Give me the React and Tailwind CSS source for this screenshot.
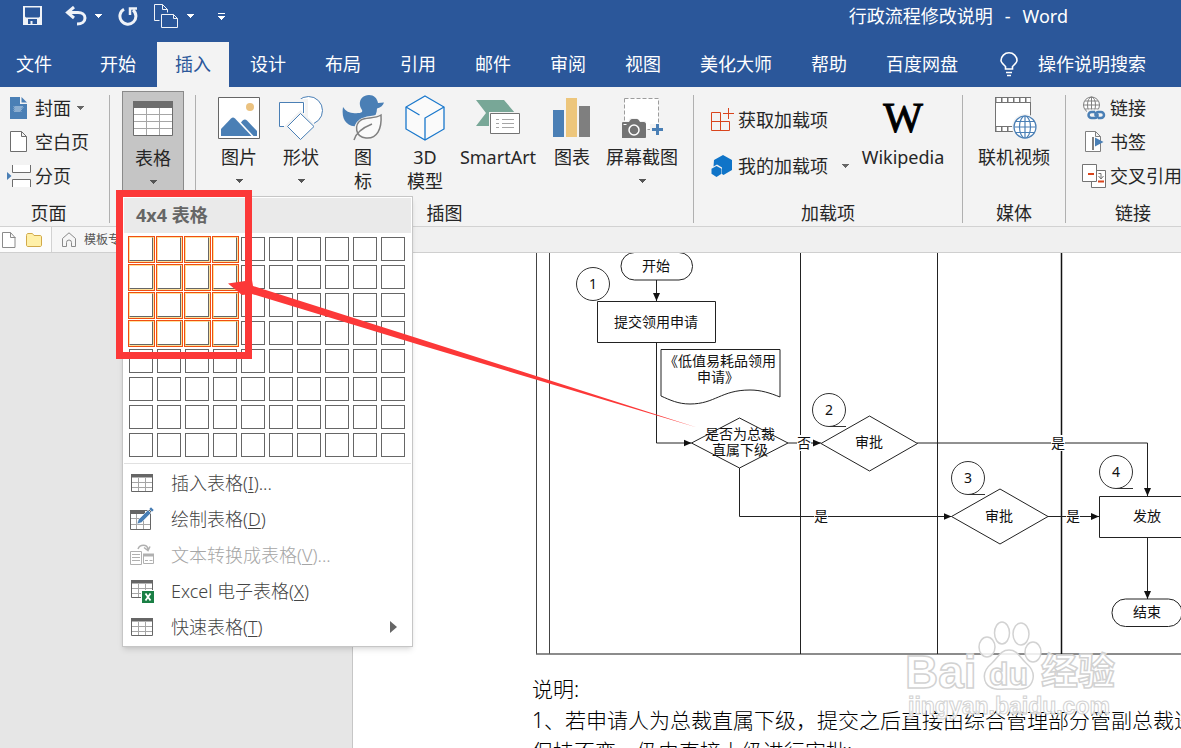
import React, { useState } from 'react';
import clsx from 'clsx';

const TABS = ['开始', '插入', '设计', '布局', '引用', '邮件', '审阅', '视图', '美化大师', '帮助', '百度网盘'];

const Caret = ({ className }) => (
  <svg width="7" height="4" viewBox="0 0 7 4" className={className} fill="currentColor" shapeRendering="crispEdges">
    <path d="M0 0h7L3.5 4z" />
  </svg>
);

/* ---------- quick access icons ---------- */

const SaveIcon = () => (
  <svg width="20" height="20" viewBox="0 0 20 20" fill="#f0f3f8">
    <path fillRule="evenodd" d="M0 0h19v19H0zM2 1.5v9l1 1h13l1-1v-9zM5 13v5h2.500v-3h2v3H14v-5z" />
  </svg>
);

const UndoIcon = () => (
  <svg width="22" height="20" viewBox="0 0 22 20" fill="none" stroke="#f0f3f8" strokeWidth="3">
    <path d="M9 1 2.500 6.500 9 12M3 6.500h10c4 0 7 2 7 5.500S17 18 12 18" />
  </svg>
);

const RedoIcon = () => (
  <svg width="20" height="20" viewBox="0 0 20 20" fill="none" stroke="#f0f3f8" strokeWidth="3">
    <path d="M6 3.200A8 8 0 1 0 15 4" />
    <path d="M12 9V2.500h7" strokeWidth="2.500" />
  </svg>
);

const CopyIcon = () => (
  <svg width="25" height="25" viewBox="0 0 25 25" fill="none" stroke="#f0f3f8">
    <path d="M5.500 16.500h-5v-16h8l5 5v3M8.500.5v5h5" />
    <path d="M7.500 10.500h12l4 4v9h-16zM19.500 10.500v4h4" />
  </svg>
);

const BulbIcon = () => (
  <svg width="18" height="25" viewBox="0 0 18 25" fill="none" stroke="#fff" strokeWidth="1.600">
    <path d="M5.500 17v-2.500C3 12 1 10.500 1 8.500a8 7.700 0 0 1 16 0c0 2-2 3.500-4.500 6V17zM6 20.500h6M7 23.500h4" />
  </svg>
);

/* ---------- ribbon icons ---------- */

const CoverIcon = () => (
  <svg width="24" height="24" viewBox="0 0 24 24">
    <path d="M3 1h10v7h7v15H3z" fill="#4a7fb5" />
    <path d="M14.500 1v5.500H20z" fill="#4a7fb5" />
    <path d="m7 10.500 1 1 1-1 1 1 1-1 1 1 1-1 1 1 1-1 1 1M7 12.500l1 1 1-1 1 1 1-1 1 1 1-1 1 1 1-1M7 14.500l1 1 1-1 1 1 1-1 1 1 1-1 1 1" fill="none" stroke="#fff" strokeWidth=".8" />
  </svg>
);

const BlankPageIcon = () => (
  <svg width="24" height="24" viewBox="0 0 24 24" fill="#fff" stroke="#6d6d6d">
    <path d="M3.500 1.500h11l5 5v15h-16zM14.500 1.500v5h5" />
  </svg>
);

const PageBreakIcon = () => (
  <svg width="24" height="24" viewBox="0 0 24 24">
    <path d="M5.500 1v7.500h18V1M5.500 23v-7.500h18V23" fill="#fff" stroke="#6d6d6d" />
    <path d="M0 8v8l4.500-4z" fill="#4a7fb5" />
  </svg>
);

const TableIcon = () => (
  <svg width="40" height="36" viewBox="0 0 40 36">
    <path d="M.5.500h39v34H.5z" fill="#fff" stroke="#6d6d6d" />
    <path d="M0 0h40v7H0z" fill="#6d6d6d" />
    <path d="M1 13.500h38M1 20.500h38M1 27.500h38M13.500 7v27M26.500 7v27" stroke="#a6a6a6" />
  </svg>
);

const PictureIcon = () => (
  <svg width="42" height="42" viewBox="0 0 42 42">
    <path d="M.5.500h41v41H.5z" fill="#fff" stroke="#666" />
    <circle cx="32" cy="10" r="4" fill="#ebc280" />
    <path d="M3 32 13 21.500c1.500-1.500 2.500-1.500 4 0L33.500 39H3z" fill="#4a7fb5" />
    <path d="M23 25.500c2-3 4-4 6-2L39 34v5h-3.500z" fill="#4a7fb5" />
  </svg>
);

const ShapesIcon = () => (
  <svg width="44" height="44" viewBox="0 0 44 44" fill="#fff" stroke="#4a7fb5">
    <circle cx="29.500" cy="14.500" r="14" />
    <path d="M-.5 4.500h28v27H-.5z" stroke="#f3f3f3" strokeWidth="3" />
    <path d="M.5 6.500h24v24H.5z" />
    <path d="M21.500 14.500 38 31 21.500 47 5 31z" stroke="#f3f3f3" fill="#f3f3f3" />
    <path d="M21.500 17.500 35 30.500l-13.500 13L8.500 30.500z" />
  </svg>
);

const DuckIcon = () => (
  <svg width="42" height="46" viewBox="0 0 42 46">
    <path d="M1 12c3 5 8 7 15 6 3 0 5-1 4-3-5-7-1-15 7-15 5 0 8 3 9 8l6-.5c-1 3-3 5-7 6 0 9-8 18-18 18C5 32-1 25 1 12z" fill="#4a7fb5" />
    <path d="M39 20c1 14-4 24-15 24-12 0-12-13-5-18 5-4 14-2 20-6z" fill="#fafafa" stroke="#f3f3f3" strokeWidth="4" />
    <path d="M39 20c1 14-4 24-15 23-11-1-12-13-5-18 5-3 14-1 20-5zM12 45c2-7 8-12 18-16" fill="#fafafa" stroke="#808080" strokeWidth="1.500" />
  </svg>
);

const CubeIcon = () => (
  <svg width="40" height="46" viewBox="0 0 40 46" fill="#fafafa" stroke="#1a78cc" strokeWidth="1.300">
    <path d="M20 1 39 12v22L20 45 1 34V12z" />
    <path d="M1 12l13.500 8M20 45V23l19-11" fill="none" />
  </svg>
);

const SmartArtIcon = () => (
  <svg width="44" height="36" viewBox="0 0 44 36">
    <path d="M0 0h28l11 13-11 13H0l10-13z" fill="#78a797" />
    <path d="M13 12h32v24H13z" fill="#f3f3f3" />
    <path d="M14.500 13.500h29v20h-29z" fill="#fff" stroke="#737373" />
    <path d="M20 19.500h3m3 0h12M20 23.500h3m3 0h12M20 27.500h3m3 0h12" stroke="#a6a6a6" />
  </svg>
);

const ChartIcon = () => (
  <svg width="38" height="40" viewBox="0 0 38 40">
    <path d="M0 12h11v27H0z" fill="#4a7fb5" />
    <path d="M13 0h11v39H13z" fill="#edc67c" />
    <path d="M26 8h11v31H26z" fill="#7f7f7f" />
  </svg>
);

const ScreenshotIcon = () => (
  <svg width="42" height="42" viewBox="0 0 42 42">
    <path d="M3.500 1.500h34v31h-34z" fill="#fff" stroke="#9c9c9c" strokeDasharray="4 2" />
    <path d="M0 24h7l2-3h7l2 3h7v18H0zM29 27h13v12H29z" fill="#f3f3f3" />
    <path d="M1 26c0-1 1-1 1-1h6c1-2 2-3 3-3h5c1 0 2 1 3 3h4c1 0 2 1 2 2v13c0 1-1 1-1 1H1z" fill="#737373" />
    <circle cx="13" cy="33" r="5" fill="#737373" stroke="#fff" strokeWidth="1.500" />
    <path d="M2.500 27.500h3" stroke="#fff" />
    <path d="M36.500 27v11M31 32.500h11" stroke="#4a7fb5" strokeWidth="3" />
  </svg>
);

const StoreIcon = () => (
  <svg width="24" height="24" viewBox="0 0 24 24" fill="none" stroke="#d9441c">
    <path d="M10.500 4.500h-9v18h18v-9h-18M10.500 4.500v18M18.500 0v11M13 5.500h11" />
  </svg>
);

const MyAddinsIcon = () => (
  <svg width="24" height="24" viewBox="0 0 24 24" fill="#0f74c8">
    <path d="m13 1 9 5v10l-8.500 5-1.500-1v-6.500l-5-3-3.500 2L4 6z" />
    <path d="m6.500 12 5 2.800v5L6.500 23l-5-3.200v-5z" />
  </svg>
);

const VideoIcon = () => (
  <svg width="46" height="44" viewBox="-3 0 46 44">
    <path d="M1.500 1.500h35v34h-35z" fill="#fff" stroke="#737373" />
    <path d="M1 4h36M1 33h36" stroke="#737373" strokeWidth="6" />
    <path d="M2.500 4h34M2.500 33h34" stroke="#fff" strokeWidth="4" strokeDasharray="4.500 1.500" />
    <circle cx="31" cy="31" r="13" fill="#f3f3f3" />
    <g fill="#fff" stroke="#4a7fb5" strokeWidth="1.200">
      <circle cx="31" cy="31" r="11" />
      <ellipse cx="31" cy="31" rx="5.500" ry="11" />
      <path d="M20 31h22M31 20v22M22 25.500h18M22 36.500h18" />
    </g>
  </svg>
);

const LinkIcon = () => (
  <svg width="24" height="24" viewBox="0 0 24 24" fill="none">
    <g stroke="#808080">
      <circle cx="9.500" cy="9" r="8" fill="#fff" />
      <ellipse cx="9.500" cy="9" rx="4" ry="8" />
      <path d="M1.500 9h16M9.500 1v16M3 5h13M3 13h13" />
    </g>
    <path d="M5 13.500h19v11H5z" fill="#f3f3f3" />
    <path d="M13 16H9.500a3 3 0 0 0 0 6H13c3 0 3-3 2-4M16 22h3a3 3 0 0 0 0-6h-3c-3 0-3 3-2 4" stroke="#4a7fb5" strokeWidth="2.500" />
  </svg>
);

const BookmarkIcon = () => (
  <svg width="24" height="24" viewBox="0 0 24 24">
    <path d="M3.500 1.500h10l5 5v15h-15zM13.500 1.500v5h5" fill="#fff" stroke="#808080" />
    <path d="M11 7v13" stroke="#555" strokeWidth="1.500" />
    <path d="M13 7.500v9l8.500-4.500z" fill="#4a7fb5" />
  </svg>
);

const CrossRefIcon = () => (
  <svg width="24" height="24" viewBox="0 0 24 24" fill="#fff" stroke="#737373">
    <path d="M9.500 6.500h14v17h-14z" />
    <path d="M.5.500h14v17H.5z" />
    <path d="M16.500 9.500h2.500v5M16.500 12l2.500 3 2.500-3" fill="none" />
    <path d="M6 10h6M16 17.500h6" stroke="#d9441c" strokeWidth="2" />
  </svg>
);

/* ---------- menu icons ---------- */

const GridGlyph = () => (
  <>
    <path d="M1.500 1.500h21v17h-21z" fill="#fff" stroke="#666" />
    <path d="M1 1h22v3.500H1z" fill="#666" />
    <path d="M2 9.500h20M2 14.500h20M8.500 5v13M15.500 5v13" stroke="#a6a6a6" />
  </>
);

const MenuTableIcon = () => (
  <svg width="24" height="20" viewBox="0 0 24 20"><GridGlyph /></svg>
);

const DrawTableIcon = () => (
  <svg width="24" height="24" viewBox="0 0 24 24">
    <path d="M.5 3.500h20v19H.5z" fill="#fff" stroke="#666" />
    <path d="M0 3h15v4H0z" fill="#666" />
    <path d="M1 11.500h12M1 17.500h19M6.500 7v15M13.500 12v10" stroke="#a6a6a6" />
    <path d="m7 17 1.500-4.500L18 3l3 3-9.500 9.500zM19 2l2-2 3 3-2 2z" fill="#4a7fb5" stroke="#fff" strokeWidth=".5" />
  </svg>
);

const ConvertIcon = () => (
  <svg width="24" height="24" viewBox="0 0 24 24" fill="none" stroke="#b0b0b0">
    <path d="M.5 8.500h11v13H.5zM2 11.500h8M2 14.500h8M2 17.500h8" />
    <path d="M13.500 11.500h10v9h-10zM15 17.500h3M19.500 17.500h3" />
    <path d="M13 12h11" strokeWidth="3" />
    <path d="M8 6c2-5 9-5 10 0M14 4.500l4 3 2-4" strokeWidth="1.500" />
  </svg>
);

const ExcelTableIcon = () => (
  <svg width="24" height="24" viewBox="0 0 24 24">
    <GridGlyph />
    <path d="M11 11h13v13H11z" fill="#fff" />
    <path d="M12 12h12v12H12z" fill="#1a7f45" />
    <path d="m15.500 14.500 5 7M20.500 14.500l-5 7" stroke="#fff" strokeWidth="1.800" />
  </svg>
);

const MENU_ITEMS = [
  { icon: <MenuTableIcon />, label: '插入表格', accel: 'I', dots: true },
  { icon: <DrawTableIcon />, label: '绘制表格', accel: 'D' },
  { icon: <ConvertIcon />, label: '文本转换成表格', accel: 'V', dots: true, disabled: true },
  { icon: <ExcelTableIcon />, label: 'Excel 电子表格', accel: 'X' },
  { icon: <MenuTableIcon />, label: '快速表格', accel: 'T', submenu: true },
];

const Separator = () => <div className="mt-1 h-32 w-px shrink-0 bg-[#b0b0b0]" />;

const Group = ({ label, className, labelClass, children }) => (
  <section className={clsx('flex shrink-0 flex-col', className)}>
    <div className="flex h-[110px]">{children}</div>
    <div className={clsx('text-center leading-6', labelClass)}>{label}</div>
  </section>
);

const BigButton = ({ icon, label, label2, caret, className }) => (
  <button type="button" className={clsx('flex h-[104px] shrink-0 flex-col items-center whitespace-nowrap', className)}>
    <span className="flex h-[54px] items-center justify-center">{icon}</span>
    <span className="leading-6">{label}</span>
    {label2 && <span className="leading-6">{label2}</span>}
    {caret && <Caret className="mt-2.5 text-[#555]" />}
  </button>
);

const SmallButton = ({ icon, label, caret, className, caretClass = 'ml-1.5' }) => (
  <button type="button" className={clsx('flex items-center whitespace-nowrap', className)}>
    <span className="mr-1 flex w-6 justify-center">{icon}</span>
    <span>{label}</span>
    {caret && <Caret className={clsx('text-[#666]', caretClass)} />}
  </button>
);

const TableMenu = ({ rows, cols, onPick }) => (
  <div className="absolute top-[105px] left-0 z-20 w-[291px] border border-[#c6c6c6] bg-white p-px text-[#444] shadow-md">
    <div className="h-[35px] bg-[#eaeaea] pl-3 leading-[35px] font-bold text-[#666]">
      {rows}x{cols} 表格
    </div>
    <div className="grid grid-cols-[repeat(10,24px)] gap-1 border-b border-[#e1e1e1] pt-1 pb-1.5 pl-[5px]">
      {Array.from({ length: 80 }, (_, i) => {
        const r = Math.floor(i / 10);
        const c = i % 10;
        const on = r < rows && c < cols;
        return (
          <button
            key={i}
            type="button"
            aria-label={`${r + 1}x${c + 1}`}
            onClick={() => onPick(r + 1, c + 1)}
            className={clsx(
              'h-6 border',
              on
                ? 'border-t-[#ffe29a] border-r-[#666] border-b-[#666] border-l-[#ffe29a] shadow-[1px_1px_0_#ffe29a,1px_0_0_#ffe29a,0_1px_0_#ffe29a,2px_2px_0_#f04e12,-1px_-1px_0_#f04e12,2px_-1px_0_#f04e12,-1px_2px_0_#f04e12]'
                : 'border-[#666]'
            )}
          />
        );
      })}
    </div>
    <ul className="pt-px font-light">
      {MENU_ITEMS.map((m) => (
        <li key={m.accel}>
          <button
            type="button"
            disabled={m.disabled}
            className={clsx('flex h-9 w-full items-center pl-1.5', m.disabled && 'text-[#a6a6a6]')}
          >
            <span className="mr-[17px] flex w-6 justify-center">{m.icon}</span>
            <span>
              {m.label}(<u className="underline-offset-2">{m.accel}</u>){m.dots && '...'}
            </span>
            {m.submenu && (
              <svg width="7" height="12" viewBox="0 0 7 12" className="mr-3.5 ml-auto" fill="#666">
                <path d="M0 0v12l7-6z" />
              </svg>
            )}
          </button>
        </li>
      ))}
    </ul>
  </div>
);

/* ---------- document drawing ---------- */

const Label = ({ x, y, children }) => (
  <text x={x} y={y + 5} textAnchor="middle" fontSize="14" fill="#111">{children}</text>
);

const LineLabel = ({ x, y, children }) => (
  <g>
    <path d={`M${x - 7} ${y - 8}h14v16h-14z`} fill="#fff" />
    <Label x={x} y={y}>{children}</Label>
  </g>
);

const Step = ({ x, y, n, tail }) => (
  <g>
    <circle cx={x} cy={y} r="16.500" fill="#fff" stroke="#333" />
    {tail && <path d={`M${x} ${y + 16.5}h17`} stroke="#333" />}
    <Label x={x} y={y}>{n}</Label>
  </g>
);

const FlowChart = () => (
  <svg width="649" height="402" viewBox="532 253 649 402" className="block shrink-0" fill="none">
    <defs>
      <marker id="tip" viewBox="0 0 8 8" refX="8" refY="4" markerWidth="8" markerHeight="8" markerUnits="userSpaceOnUse" orient="auto">
        <path d="M0 .5 8 4 0 7.500z" fill="#111" />
      </marker>
    </defs>
    <g stroke="#444">
      <path d="M536.500 253v401M549.500 253v401" />
      <path d="M536 654h645" stroke="#666" strokeWidth="1.500" />
      <path d="M800.500 253v401M937.500 253v401" stroke="#222" />
      <path d="M1061.500 253v401" stroke="#111" strokeWidth="1.500" />
    </g>
    <g stroke="#222">
      <rect x="621" y="252.500" width="71.500" height="27.500" rx="13.500" />
      <path d="M597.500 301.500h118v41h-118z" />
      <path d="M661 349.500h119V397c-10-4-19-7-30-7-29 0-35 14-60 14-12 0-20-4-29-8z" />
      <path d="m691.500 443 48-25 48.500 25-48.500 25z" />
      <path d="m821 443.500 48.500-27.500 48 27.500-48 27.500z" />
      <path d="m951.500 516.500 48.500-27.500 48 27.500-48 27.500z" />
      <path d="M1099.500 496.500h95v41h-95z" />
      <rect x="1112" y="599" width="70" height="27.500" rx="13.500" />
      <path d="M656.500 280v21" markerEnd="url(#tip)" />
      <path d="M656.500 343v100h35" markerEnd="url(#tip)" />
      <path d="M788 443h33" markerEnd="url(#tip)" />
      <path d="M917 443h230.500v53" markerEnd="url(#tip)" />
      <path d="M739.500 468v48.500h212" markerEnd="url(#tip)" />
      <path d="M1048 516.500h51" markerEnd="url(#tip)" />
      <path d="M1147.500 538v61" markerEnd="url(#tip)" />
    </g>
    <Step x={593} y={284} n="1" />
    <Step x={829} y={410} n="2" tail />
    <Step x={968} y={478} n="3" tail />
    <Step x={1116} y={472} n="4" tail />
    <Label x={656} y={266}>开始</Label>
    <Label x={656} y={322}>提交领用申请</Label>
    <Label x={720} y={361}>《低值易耗品领用</Label>
    <Label x={718} y={377}>申请》</Label>
    <Label x={740} y={434}>是否为总裁</Label>
    <Label x={740} y={450}>直属下级</Label>
    <Label x={869} y={442}>审批</Label>
    <Label x={999} y={516}>审批</Label>
    <Label x={1147} y={516}>发放</Label>
    <Label x={1147} y={612}>结束</Label>
    <LineLabel x={804} y={443}>否</LineLabel>
    <LineLabel x={1058} y={443}>是</LineLabel>
    <LineLabel x={821} y={516}>是</LineLabel>
    <LineLabel x={1073} y={516}>是</LineLabel>
  </svg>
);

const Watermark = () => (
  <svg
    width="220"
    height="104"
    viewBox="900 618 220 104"
    className="pointer-events-none absolute top-[365px] left-[547px]"
    fill="#fff"
    fillOpacity=".85"
    stroke="#d2d2d2"
  >
    <g strokeWidth="1.500">
      <ellipse cx="987" cy="647" rx="8" ry="10" />
      <ellipse cx="1002" cy="633" rx="7.500" ry="11" />
      <ellipse cx="1021" cy="634" rx="8" ry="11" />
      <ellipse cx="1033" cy="652" rx="8" ry="10" />
      <path d="M1009 650c9 0 11 8 17 13 7 6 9 12 6 19-4 9-13 7-22 7s-19 2-24-6c-4-8 0-15 6-20s8-13 17-13z" />
    </g>
    <g fontFamily="Liberation Sans, Noto Sans CJK SC, sans-serif" fontWeight="700" strokeWidth="1.500">
      <text x="905" y="688" fontSize="46">Bai</text>
      <text x="989" y="685" fontSize="32">du</text>
      <text x="1041" y="685" fontSize="37">经验</text>
    </g>
    <text x="908" y="714" fontSize="23" fontFamily="Liberation Sans, sans-serif" fontWeight="700">jingyan.baidu.com</text>
  </svg>
);

const Annotation = () => (
  <svg width="700" height="440" viewBox="0 0 700 440" className="pointer-events-none absolute top-0 left-0 z-30">
    <path d="M119.500 193.500h129v162h-129z" fill="none" stroke="#fc3838" strokeWidth="7" />
    <path d="M228 283.500 252 280l1 6 167 53 277 88.500L420 345 252 294l-10 1z" fill="#fc3838" />
  </svg>
);

export default function App() {
  const [active, setActive] = useState('插入');
  const [size, setSize] = useState({ rows: 4, cols: 4 });

  return (
    <div className="relative flex h-screen flex-col overflow-hidden bg-[#e6e6e6] font-['Noto_Sans','Noto_Sans_CJK_SC',sans-serif] text-[18px] text-[#262626]">
      <header className="shrink-0 bg-[#2b579a] text-white">
        <div className="flex h-[42px] items-start">
          <div className="flex h-8 items-center pl-[23px]">
            <button type="button" aria-label="保存"><SaveIcon /></button>
            <button type="button" aria-label="撤消" className="ml-[22px] flex items-center gap-2">
              <UndoIcon />
              <Caret />
            </button>
            <button type="button" aria-label="重复" className="ml-4"><RedoIcon /></button>
            <button type="button" aria-label="新建" className="ml-4 flex items-center gap-2">
              <CopyIcon />
              <Caret />
            </button>
            <button type="button" aria-label="自定义" className="ml-6">
              <svg width="7" height="7" viewBox="0 0 7 7" fill="#fff" shapeRendering="crispEdges">
                <path d="M0 0h7v1H0zM0 3h7L3.500 7z" />
              </svg>
            </button>
          </div>
          <h1 className="mr-[113px] ml-auto flex gap-3 leading-8">
            <span>行政流程修改说明</span>
            <span>-</span>
            <span>Word</span>
          </h1>
        </div>
        <nav className="flex h-[45px] items-stretch whitespace-nowrap">
          <button type="button" className="w-[82px] shrink-0 pl-4 text-left">文件</button>
          <div className="flex gap-[3px]">
            {TABS.map((t) => (
              <button
                key={t}
                type="button"
                onClick={() => setActive(t)}
                className={clsx('px-[18px]', t === active && 'bg-[#f3f3f3] text-[#2b579a]')}
              >
                {t}
              </button>
            ))}
          </div>
          <button type="button" className="ml-6 flex items-center gap-5">
            <BulbIcon />
            操作说明搜索
          </button>
        </nav>
      </header>

      <div className="flex h-[140px] shrink-0 border-b border-[#d2d2d2] bg-[#f3f3f3] pt-1">
        <Group label="页面" className="w-[109px]" labelClass="pr-3">
          <div className="flex flex-col pl-[7px]">
            <SmallButton icon={<CoverIcon />} label="封面" caret className="h-[34px]" />
            <SmallButton icon={<BlankPageIcon />} label="空白页" className="h-[34px]" />
            <SmallButton icon={<PageBreakIcon />} label="分页" className="h-[34px]" />
          </div>
        </Group>
        <Separator />
        <div className="relative w-[85px] shrink-0 px-3">
          <div className="relative">
            <BigButton icon={<TableIcon />} label="表格" caret className="w-[62px] border border-[#8a8a8a] bg-[#c5c5c5]" />
            <TableMenu rows={size.rows} cols={size.cols} onPick={(rows, cols) => setSize({ rows, cols })} />
          </div>
        </div>
        <Separator />
        <Group label="插图" className="w-[497px]">
          <div className="flex pl-3">
            <BigButton icon={<PictureIcon />} label="图片" caret className="w-[62px]" />
            <BigButton icon={<ShapesIcon />} label="形状" caret className="w-[62px]" />
            <BigButton icon={<DuckIcon />} label="图" label2="标" className="w-[62px]" />
            <BigButton icon={<CubeIcon />} label="3D" label2="模型" className="w-[62px]" />
            <BigButton icon={<SmartArtIcon />} label="SmartArt" className="w-[84px]" />
            <BigButton icon={<ChartIcon />} label="图表" className="w-16" />
            <BigButton icon={<ScreenshotIcon />} label="屏幕截图" caret className="w-[76px]" />
          </div>
        </Group>
        <Separator />
        <Group label="加载项" className="w-[268px]">
          <div className="flex w-[162px] flex-col pt-1.5 pl-4">
            <SmallButton icon={<StoreIcon />} label="获取加载项" className="h-[46px]" />
            <SmallButton icon={<MyAddinsIcon />} label="我的加载项" caret caretClass="ml-3.5" className="h-[46px]" />
          </div>
          <BigButton
            icon={
              <span className="font-['Liberation_Serif',serif] text-[42px] leading-none text-black [-webkit-text-stroke:1px_black]">
                W
              </span>
            }
            label="Wikipedia"
            className="w-[94px]"
          />
        </Group>
        <Separator />
        <Group label="媒体" className="w-[102px]">
          <BigButton icon={<VideoIcon />} label="联机视频" className="w-full" />
        </Group>
        <Separator />
        <Group label="链接" className="w-[134px]">
          <div className="flex flex-col pl-4">
            <SmallButton icon={<LinkIcon />} label="链接" className="h-[34px]" />
            <SmallButton icon={<BookmarkIcon />} label="书签" className="h-[34px]" />
            <SmallButton icon={<CrossRefIcon />} label="交叉引用" className="h-[34px]" />
          </div>
        </Group>
      </div>

      <div className="flex h-[26px] shrink-0 border-b border-[#cfcfcf] bg-[#f0f0f0] text-[12px] text-[#555]">
        <div className="flex w-[52px] items-center gap-2.5 border-r border-[#d2d2d2] bg-[#fcfcfc] pl-0.5">
          <svg width="14" height="16" viewBox="0 0 14 16" fill="#fff" stroke="#8a8a8a">
            <path d="M.5.500h8l4.500 5v10H.5zM8.500.5v5h5" />
          </svg>
          <svg width="16" height="14" viewBox="0 0 16 14" fill="#fff0a8" stroke="#d1a94a">
            <path d="M.5 2.500c0-1 .5-2 1.500-2h4c1 0 1.500 1.500 2 2h6c1 0 1.500.5 1.500 1.500v8c0 1-.5 1.500-1.500 1.500H2c-1 0-1.500-.5-1.500-1.500z" />
          </svg>
        </div>
        <button type="button" className="flex items-center gap-2 bg-[#f6f6f6] pl-2.5">
          <svg width="14" height="15" viewBox="0 0 14 15" fill="none" stroke="#8a8a8a">
            <path d="M.5 6.500 7 .8l6.500 5.700v8h-4v-4a2.500 2.500 0 0 0-5 0v4h-4z" />
          </svg>
          模板专
        </button>
      </div>

      <div className="flex min-h-0 flex-1">
        <aside className="w-[352px] shrink-0" />
        <main className="relative min-w-0 flex-1 overflow-hidden border-l border-[#c6c6c6] bg-white pl-[179px]">
          <FlowChart />
          <div className="mt-[19px] text-[21px] leading-[31px] font-light whitespace-nowrap text-black">
            <p>说明:</p>
            <p>1、若申请人为总裁直属下级，提交之后直接由综合管理部分管副总裁进</p>
            <p>保持不变，仍由直接上级进行审批;</p>
          </div>
          <Watermark />
        </main>
      </div>

      <Annotation />
    </div>
  );
}
